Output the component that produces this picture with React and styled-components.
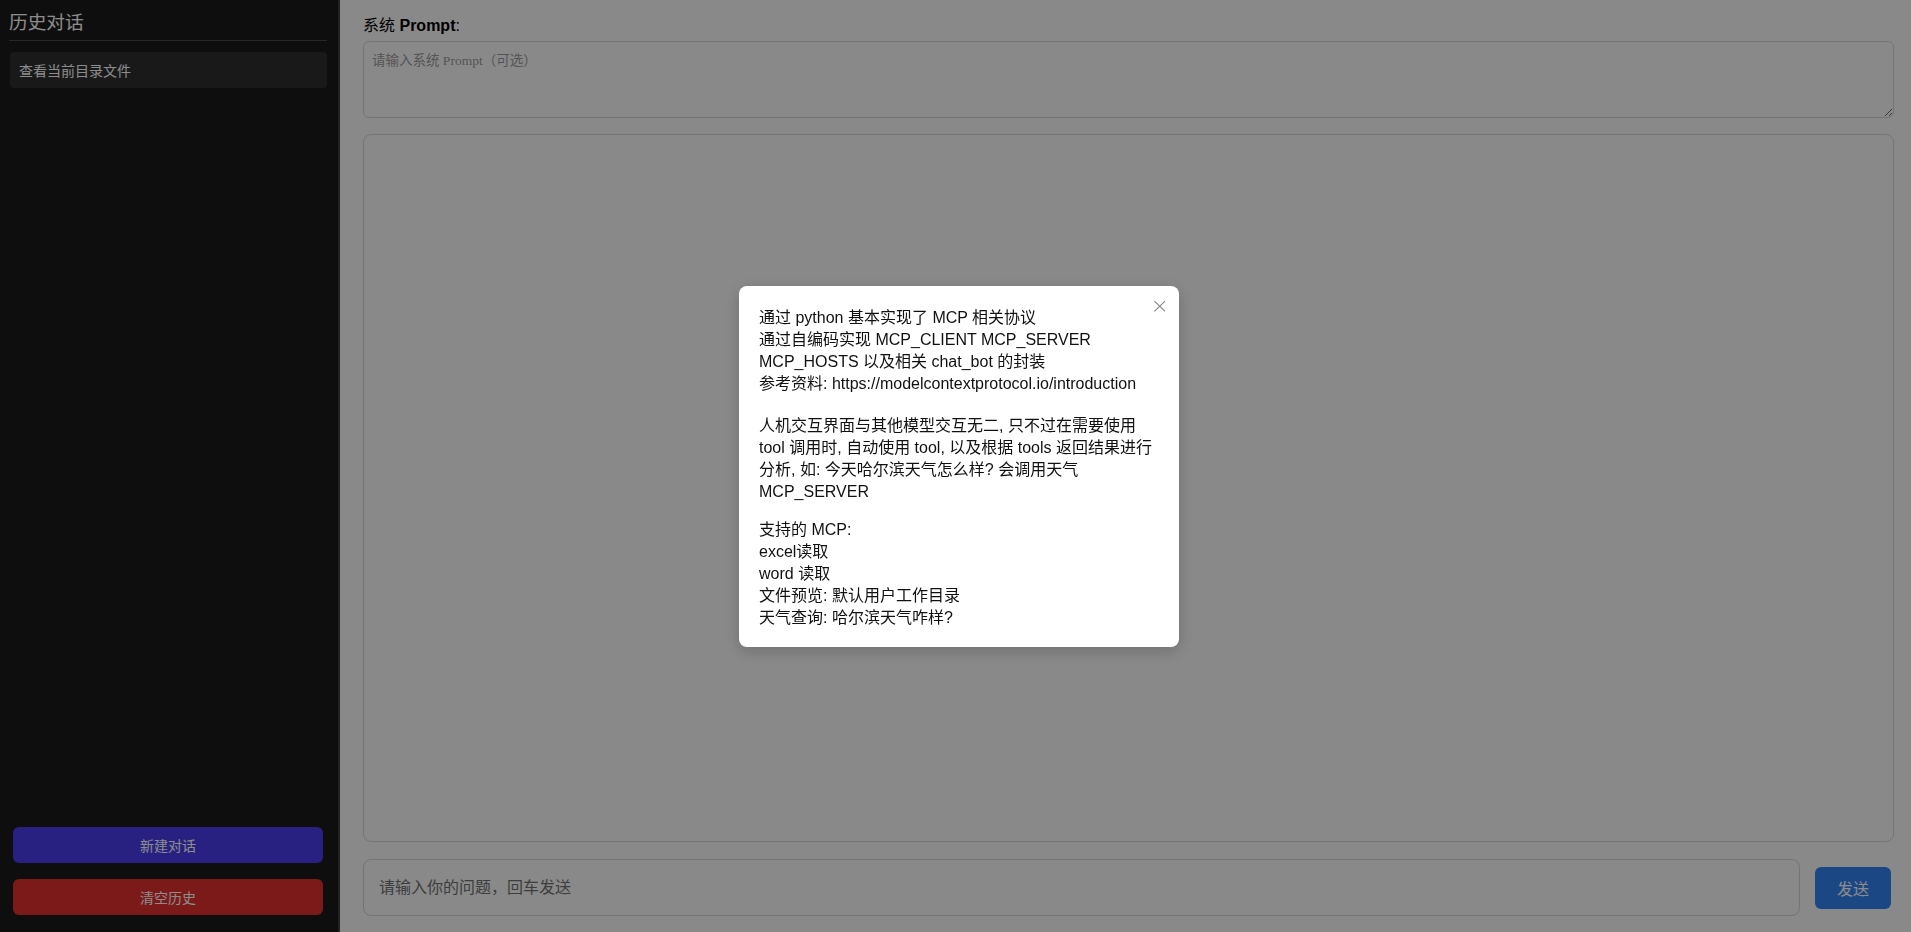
import React from 'react'
import styled, { createGlobalStyle } from 'styled-components'

const GlobalStyle = createGlobalStyle`
  html, body {
    margin: 0;
    padding: 0;
    height: 100%;
    overflow: hidden;
  }
  body {
    font-family: 'Liberation Sans', 'Noto Sans CJK SC', sans-serif;
    background: #fafafa;
  }
`;

const Layout = styled.div`
  display: flex;
  height: 100vh;
  width: 100vw;
`;

const Sidebar = styled.aside`
  width: 338px;
  flex-shrink: 0;
  background-color: #1a1a1a;
  border-right: 2px solid #3c3c3c;
  display: flex;
  flex-direction: column;
  justify-content: space-between;
  color: #fff;
`;

const SideTop = styled.div`
  display: flex;
  flex-direction: column;
  padding: 10px 11px 0 9px;
`;

const SideTitle = styled.h3`
  margin: 0;
  font-size: 18.7px;
  font-weight: normal;
  line-height: 26px;
  padding-bottom: 4px;
  border-bottom: 1px solid #4a4a4a;
`;

const HistoryItem = styled.div`
  margin-top: 11px;
  margin-left: 1px;
  height: 36px;
  display: flex;
  align-items: center;
  padding: 0 9px;
  background-color: #2e2e2e;
  border-radius: 4px;
  font-size: 14px;
  color: #fff;
`;

const SideActions = styled.div`
  display: flex;
  flex-direction: column;
  gap: 16px;
  padding: 0 15px 17px 13px;
`;

const SideButton = styled.button`
  height: 36px;
  border: none;
  border-radius: 6px;
  background-color: ${p => p.$danger ? '#e23030' : '#4a3ded'};
  color: #fff;
  font-family: 'Liberation Sans', 'Noto Sans CJK SC', sans-serif;
  font-size: 14px;
  cursor: pointer;
`;

const Main = styled.main`
  flex: 1;
  min-width: 0;
  display: flex;
  flex-direction: column;
  padding: 16px 17px 16px 23px;
  background-color: #fafafa;
`;

const PromptLabel = styled.label`
  font-size: 16px;
  line-height: 20px;
  color: #000;
  b {
    font-weight: bold;
  }
`;

const PromptArea = styled.textarea`
  margin-top: 5px;
  height: 77px;
  box-sizing: border-box;
  border: 1px solid #d6d6d6;
  border-radius: 6px;
  padding: 9px 8px 10px;
  font-family: 'Liberation Serif', 'Noto Sans CJK SC', serif;
  font-size: 13.5px;
  line-height: 20px;
  background: #fafafa;
  resize: vertical;
  &::placeholder {
    color: #9a9a9a;
  }
`;

const ChatBox = styled.div`
  flex: 1;
  margin-top: 16px;
  border: 1px solid #d6d6d6;
  border-radius: 8px;
  background: #fafafa;
`;

const InputRow = styled.div`
  margin-top: 17px;
  display: flex;
  align-items: center;
  gap: 15px;
  padding-right: 3px;
`;

const QuestionInput = styled.input`
  flex: 1;
  height: 57px;
  box-sizing: border-box;
  border: 1px solid #d6d6d6;
  border-radius: 8px;
  padding: 0 15px;
  font-family: 'Liberation Sans', 'Noto Sans CJK SC', sans-serif;
  font-size: 16px;
  background: #fafafa;
  &::placeholder {
    color: #707070;
  }
`;

const SendButton = styled.button`
  width: 76px;
  height: 42px;
  border: none;
  border-radius: 6px;
  background-color: #3482f2;
  color: #fff;
  font-family: 'Liberation Sans', 'Noto Sans CJK SC', sans-serif;
  font-size: 16px;
  cursor: pointer;
`;

const Overlay = styled.div`
  position: fixed;
  inset: 0;
  background: rgba(0, 0, 0, 0.45);
  display: flex;
  align-items: center;
  justify-content: center;
`;

const Modal = styled.div`
  position: relative;
  width: 440px;
  box-sizing: border-box;
  padding: 21px 20px 18px 20px;
  margin-left: 7px;
  background: #fff;
  border-radius: 8px;
  color: #111;
  font-size: 16px;
  line-height: 22px;
  white-space: nowrap;
  box-shadow: 0 4px 16px rgba(0, 0, 0, 0.2);
`;

const CloseButton = styled.button`
  position: absolute;
  top: 8px;
  right: 10px;
  border: none;
  background: none;
  color: #888;
  font-size: 22px;
  line-height: 24px;
  padding: 0;
  cursor: pointer;
  font-family: 'DejaVu Sans', sans-serif;
  font-weight: 300;
`;

const Para = styled.p`
  margin: ${p => p.$gap || 0}px 0 0 0;
`;

const App = () => {
  return (
    <>
      <GlobalStyle />
      <Layout>
        <Sidebar>
          <SideTop>
            <SideTitle>历史对话</SideTitle>
            <HistoryItem>查看当前目录文件</HistoryItem>
          </SideTop>
          <SideActions>
            <SideButton>新建对话</SideButton>
            <SideButton $danger>清空历史</SideButton>
          </SideActions>
        </Sidebar>
        <Main>
          <PromptLabel>系统 <b>Prompt</b>:</PromptLabel>
          <PromptArea placeholder="请输入系统 Prompt（可选）" />
          <ChatBox />
          <InputRow>
            <QuestionInput placeholder="请输入你的问题，回车发送" />
            <SendButton>发送</SendButton>
          </InputRow>
        </Main>
      </Layout>
      <Overlay>
        <Modal>
          <CloseButton>×</CloseButton>
          <Para>
            通过 python 基本实现了 MCP 相关协议<br />
            通过自编码实现 MCP_CLIENT MCP_SERVER<br />
            MCP_HOSTS 以及相关 chat_bot 的封装<br />
            参考资料: https://modelcontextprotocol.io/introduction
          </Para>
          <Para $gap={20}>
            人机交互界面与其他模型交互无二, 只不过在需要使用<br />
            tool 调用时, 自动使用 tool, 以及根据 tools 返回结果进行<br />
            分析, 如: 今天哈尔滨天气怎么样? 会调用天气<br />
            MCP_SERVER
          </Para>
          <Para $gap={16}>
            支持的 MCP:<br />
            excel读取<br />
            word 读取<br />
            文件预览: 默认用户工作目录<br />
            天气查询: 哈尔滨天气咋样?
          </Para>
        </Modal>
      </Overlay>
    </>
  )
}

export default App
